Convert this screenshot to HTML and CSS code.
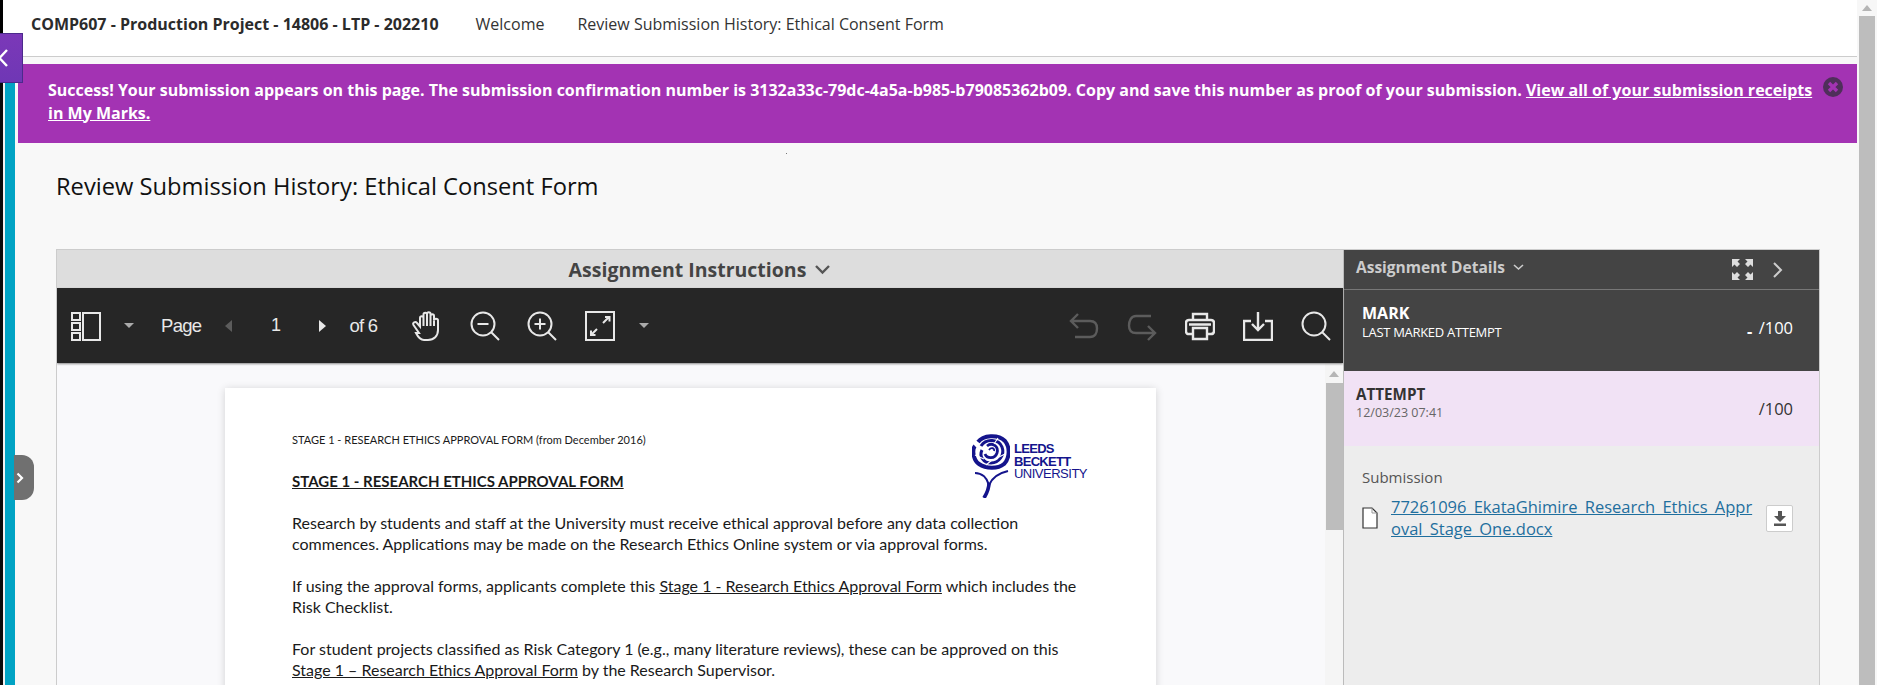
FILE: index.html
```html
<!DOCTYPE html>
<html lang="en">
<head>
<meta charset="utf-8">
<title>Review Submission History: Ethical Consent Form</title>
<link rel="stylesheet" href="styles.css">
</head>
<body>
<div class="app">
  <div class="rail"><div class="rail-top"></div><div class="rail-bottom"></div></div>
  <button class="nav-tab" aria-label="Collapse"><svg width="10" height="22" viewBox="0 0 10 22"><path d="M9 3 1.500 11 9 19" fill="none" stroke="#fff" stroke-width="2.400"/></svg></button>
  <button class="side-handle" aria-label="Expand"><svg width="8" height="12" viewBox="0 0 8 12"><path d="M1.500 1.500 6 6l-4.500 4.500" fill="none" stroke="#fff" stroke-width="2.200"/></svg></button>
  <main class="main">
    <header class="topbar">
      <strong class="course">COMP607 - Production Project - 14806 - LTP - 202210</strong>
      <span class="crumb crumb-first">Welcome</span>
      <span class="crumb">Review Submission History: Ethical Consent Form</span>
    </header>
    <section class="banner">
      <p class="banner-text"><span>Success! Your submission appears on this page. The submission confirmation number is 3132a33c-79dc-4a5a-b985-b79085362b09. Copy and save this number as proof of your submission.</span> <a href="#">View all of your submission receipts</a> <a href="#">in My Marks.</a></p>
      <svg class="banner-close" width="20" height="20" viewBox="0 0 20 20"><circle cx="10" cy="10" r="10" fill="#4f2f5a"/><path d="M6 6l8 8M14 6l-8 8" stroke="#a333b3" stroke-width="3.400"/></svg>
    </section>
    <div class="dot"></div>
    <h1 class="page-title">Review Submission History: Ethical Consent Form</h1>
    <section class="workspace">
      <div class="viewer">
        <div class="instructions">Assignment Instructions <svg width="17" height="11" viewBox="0 0 17 11"><path d="M2 2l6.500 6.500L15 2" fill="none" stroke="#555" stroke-width="2.400"/></svg></div>
        <div class="toolbar">
          <div class="tool-group">
            <svg class="icon" viewBox="0 0 30 30" fill="none" stroke="#e8e8e8" stroke-width="2"><path d="M1 2h8v7H1zM1 12h8v7H1zM1 22h8v7H1zM12 2h17v27H12z"/></svg>
            <span class="caret caret-a"></span>
            <span class="pg-label pg-page">Page</span>
            <span class="tri-left"></span>
            <span class="pg-num">1</span>
            <span class="tri-right"></span>
            <span class="pg-label pg-of">of 6</span>
            <svg class="icon tool-hand" viewBox="0 0 30 30" fill="none" stroke="#e8e8e8" stroke-width="2"><path d="M7 22 1.500 14c-1.500-2.500 2-4 3.500-2l3 3.500V7c0-2.500 3.500-2.500 3.500 0V3.500c0-2.500 3.500-2.500 3.500 0V3c0-2.500 3.500-2.500 3.500 0v2c0-2.500 3.500-2.500 3.500 0v4.500c0-2.500 4-2.500 4 0V19c0 6-4 10-10 10h-4c-4 0-6-3-8-7z"/><path d="M11.500 7v8M15 3v12M18.500 5v10M22 9.500V15"/></svg>
            <svg class="icon tool" viewBox="0 0 30 30" fill="none" stroke="#e8e8e8" stroke-width="2"><circle cx="13" cy="13" r="11.500"/><path d="M21 21l8 8M7.500 13h11"/></svg>
            <svg class="icon tool" viewBox="0 0 30 30" fill="none" stroke="#e8e8e8" stroke-width="2"><circle cx="13" cy="13" r="11.500"/><path d="M21 21l8 8M7.500 13h11M13 7.500v11"/></svg>
            <svg class="icon tool" viewBox="0 0 30 30" fill="none" stroke="#e8e8e8" stroke-width="2"><path d="M1 1h28v28H1z"/><path d="M18 12l6-6M20 6h4.500v4.500M12 18l-6 6M6 19.500V24h4.500"/></svg>
            <span class="caret caret-b"></span>
          </div>
          <div class="tool-group tool-right">
            <svg class="icon dim" viewBox="0 0 30 30" fill="none" stroke="#5c5c5c" stroke-width="2.400"><path d="M9 3 2 10l7 7M2 10h19c5 0 7 3 7 7.500S26 26 21 26H6"/></svg>
            <svg class="icon dim" viewBox="0 0 30 30" fill="none" stroke="#5c5c5c" stroke-width="2.400"><path d="M21 15l7 7-7 7M28 22H9c-5 0-7-3-7-7.500S4 5 9 5h15"/></svg>
            <svg class="icon" viewBox="0 0 30 30" fill="none" stroke="#e8e8e8" stroke-width="2.400"><path d="M8 9V3h14v6M7 23H4c-2 0-3-1-3-3v-8c0-2 1-3 3-3h22c2 0 3 1 3 3v8c0 2-1 3-3 3h-3"/><path d="M8 17h14v11H8zM4 13.500h22"/></svg>
            <svg class="icon" viewBox="0 0 30 30" fill="none" stroke="#e8e8e8" stroke-width="2.400"><path d="M8 10H1v19h28V10h-7M15 1v18M9 13l6 6 6-6"/></svg>
            <svg class="icon" viewBox="0 0 30 30" fill="none" stroke="#e8e8e8" stroke-width="2"><circle cx="13" cy="13" r="11.500"/><path d="M21 21l8 8"/></svg>
          </div>
        </div>
        <div class="doc-area">
          <div class="doc-scroll">
            <article class="doc-page">
              <div class="doc-head">
                <div class="doc-meta">STAGE 1 - RESEARCH ETHICS APPROVAL FORM (from December 2016)</div>
                <div class="logo">
                  <svg width="38" height="64" viewBox="0 0 38 64" fill="none" stroke="#14148c"><path d="M6 8C11 1 26 0 33 7c5 6 5 17-1 23-6 5-18 5-25 0C1 26 0 15 3 12" stroke-width="4"/><path d="M9 12c5-8 18-7 21 1 3 8-3 16-11 16-8 0-12-7-9-13" stroke-width="3"/><path d="M15 12c5-4 12 0 10 7-2 6-10 6-12 1" stroke-width="2.800"/><path d="M17 16c2-3 6-2 5 1" stroke-width="1.800"/><path d="M3 21l9 4M26 4l-4 6M33 20l-6 3M14 31l6-5" stroke="#fff" stroke-width="1.100"/><path d="M3 39c7 0 12 5 14 12 3-7 10-12 19-14" stroke-width="2.200"/><path d="M17 49c0 5-2 10-5 15" stroke-width="3.600"/></svg>
                  <div class="logo-text">LEEDS<br>BECKETT<br><span class="logo-thin">UNIVERSITY</span></div>
                </div>
              </div>
              <h2 class="doc-title">STAGE 1 - RESEARCH ETHICS APPROVAL FORM</h2>
              <p class="doc-p">Research by students and staff at the University must receive ethical approval before any data collection<br>commences. Applications may be made on the Research Ethics Online system or via approval forms.</p>
              <p class="doc-p">If using the approval forms, applicants complete this <u>Stage 1 - Research Ethics Approval Form</u> which includes the<br>Risk Checklist.</p>
              <p class="doc-p">For student projects classified as Risk Category 1 (e.g., many literature reviews), these can be approved on this<br><u>Stage 1 – Research Ethics Approval Form</u> by the Research Supervisor.</p>
            </article>
          </div>
          <div class="doc-scrollbar"><span class="arrow-up"></span><div class="doc-thumb"></div></div>
        </div>
      </div>
      <aside class="details">
        <div class="details-head">
          <span class="details-title">Assignment Details <svg width="11" height="7" viewBox="0 0 11 7"><path d="M1 1l4.500 4L10 1" fill="none" stroke="#ccc" stroke-width="1.600"/></svg></span>
          <svg class="expand" width="21" height="21" viewBox="0 0 21 21" fill="#ddd"><path d="M0 0h8L5.500 2.500 8 5 5 8 2.500 5.500 0 8zM21 0h-8l2.500 2.500L13 5l3 3 2.500-2.500L21 8zM0 21h8l-2.500-2.500L8 16l-3-3-2.500 2.500L0 13zM21 21h-8l2.500-2.500L13 16l3-3 2.500 2.500L21 13z"/></svg>
          <svg class="collapse" width="12" height="16" viewBox="0 0 12 16"><path d="M2 1l7 7-7 7" fill="none" stroke="#ccc" stroke-width="2"/></svg>
        </div>
        <div class="mark">
          <div><div class="mark-label">MARK</div><div class="mark-sub">LAST MARKED ATTEMPT</div></div>
          <div class="score"><span class="score-dash">-</span> /100</div>
        </div>
        <div class="attempt">
          <div><div class="attempt-label">ATTEMPT</div><div class="attempt-date">12/03/23 07:41</div></div>
          <div class="score score-dark">/100</div>
        </div>
        <div class="submission">
          <div class="sub-label">Submission</div>
          <div class="sub-row">
            <svg class="file-icon" width="16" height="22" viewBox="0 0 16 22"><path d="M1 1h9l5 5v15H1z" fill="#fff" stroke="#333" stroke-width="1.200"/><path d="M10 1v5h5" fill="none" stroke="#999"/></svg>
            <a class="sub-link" href="#">77261096_EkataGhimire_Research_Ethics_Approval_Stage_One.docx</a>
            <span class="dl-btn"><svg width="14" height="15" viewBox="0 0 14 15" fill="#555"><path d="M5 0h4v5h4L7 11 1 5h4zM1 12.500h12V15H1z"/></svg></span>
          </div>
        </div>
      </aside>
    </section>
  </main>
  <div class="scrollbar"><span class="arrow-up arrow-main"></span><div class="scroll-thumb"></div></div>
</div>
</body>
</html>
```
FILE: styles.css
```css
* { box-sizing: border-box; }
html, body { margin: 0; padding: 0; height: 685px; overflow: hidden; background: #f8f8f8; }
body { font-family: "Open Sans", "Noto Sans", sans-serif; color: #222; }
.app { position: relative; display: flex; width: 1877px; height: 685px; overflow: hidden; }

.rail { width: 18px; flex: none; display: flex; flex-direction: column; }
.rail-top { height: 83px; background: linear-gradient(to right, #000 3px, #fff 3px); }
.rail-bottom { flex: 1; background: linear-gradient(to right, #0a0a0a 3px, #f2f2f2 3px, #f2f2f2 5px, #01a3c4 5px, #01a3c4 15.500px, #f8f8f8 15.500px); }

.nav-tab { position: absolute; left: 0; top: 33px; width: 23px; height: 50px; padding: 0; border: 1px solid #4c2a8c; border-left: 0; background: linear-gradient(#7b38b8, #6f37b5); display: flex; align-items: center; justify-content: flex-start; z-index: 3; overflow: hidden; }
.nav-tab svg { margin-left: -2px; }
.side-handle { position: absolute; left: 14px; top: 455px; width: 20px; height: 45px; padding: 0 0 0 2px; border: 0; border-radius: 0 12px 12px 0; background: #707070; display: flex; align-items: center; justify-content: flex-start; z-index: 3; }

.main { flex: 1; min-width: 0; display: flex; flex-direction: column; height: 685px; }
.topbar { height: 57px; flex: none; display: flex; align-items: center; padding: 0 0 8px 13px; background: #fff; border-bottom: 1px solid #ccc; font-size: 16px; color: #333; }
.course { font-weight: 700; color: #2b2b2b; white-space: nowrap; }
.crumb { margin-left: 33px; white-space: nowrap; }
.crumb-first { margin-left: 37px; }

.banner { flex: none; margin-top: 7px; height: 79px; padding: 15px 14px 0 30px; background: #a333b3; display: flex; align-items: flex-start; gap: 9px; color: #fff; }
.banner-text { margin: 0; flex: 1; font-size: 16px; font-weight: 700; line-height: 22.500px; }
.banner-text a { color: #fff; text-decoration: underline; }
.banner-close { flex: none; margin-top: -2px; }
.dot { width: 1px; height: 1px; margin: 10px 0 0 768px; background: #777; flex: none; }

.page-title { margin: 17px 0 0 38px; font-size: 23.700px; line-height: 30px; font-weight: 400; color: #111; flex: none; }

.workspace { flex: 1; min-height: 0; display: flex; width: 1764px; margin: 48px 0 0 38px; border: 1px solid #ccc; border-bottom: 0; overflow: hidden; }
.viewer { width: 1286px; flex: none; display: flex; flex-direction: column; }
.instructions { height: 38px; flex: none; background: #ddd; display: flex; align-items: center; justify-content: center; gap: 8px; font-size: 19.500px; font-weight: 700; color: #444; }

.toolbar { height: 75px; flex: none; display: flex; justify-content: space-between; align-items: center; background: #262626; padding: 0 12px 0 14px; box-shadow: 0 1px 2px #888; z-index: 1; }
.tool-group { display: flex; align-items: center; }
.tool-right { gap: 28px; }
.icon { width: 30px; height: 30px; flex: none; display: block; }
.tool { margin-left: 27.500px; }
.tool-hand { margin-left: 35px; }
.caret { width: 0; height: 0; border-left: 5px solid transparent; border-right: 5px solid transparent; border-top: 5px solid #aaa; flex: none; }
.caret-a { margin-left: 23px; }
.caret-b { margin-left: 24px; }
.pg-label { font-family: "Liberation Sans", Arial, sans-serif; font-size: 18.500px; letter-spacing: -0.7px; color: #e8e8e8; }
.pg-page { margin-left: 27px; }
.pg-of { margin-left: 23px; }
.tri-left, .tri-right { width: 0; height: 0; border-top: 6px solid transparent; border-bottom: 6px solid transparent; flex: none; }
.tri-left { border-right: 7px solid #5c5c5c; margin-left: 24px; }
.tri-right { border-left: 7px solid #e8e8e8; }
.pg-num { width: 87px; text-align: center; font-family: "Liberation Sans", Arial, sans-serif; font-size: 18px; color: #e8e8e8; }

.doc-area { flex: 1; min-height: 0; display: flex; background: #f9f9fb; }
.doc-scroll { flex: 1; min-width: 0; padding: 25px 0 0 168px; overflow: hidden; }
.doc-page { width: 931px; height: 340px; padding: 38px 58px 0 67px; background: #fff; box-shadow: 0 1px 8px rgba(0,0,0,.16); font-family: Lato, "Liberation Sans", sans-serif; font-size: 16px; line-height: 21px; color: #1a1a1a; white-space: nowrap; }
.doc-head { display: flex; justify-content: space-between; align-items: flex-start; height: 45px; }
.doc-meta { font-size: 11px; line-height: 28px; }
.logo { display: flex; align-items: flex-start; gap: 4px; margin: 8px 11px 0 0; height: 64px; }
.logo-text { margin-top: 9px; font-family: "Liberation Sans", Arial, sans-serif; font-weight: 700; font-size: 13px; line-height: 12.500px; letter-spacing: -0.7px; color: #14148c; }
.logo-thin { font-weight: 400; letter-spacing: -0.5px; }
.doc-title { margin: 0 0 20px; font-size: 15px; line-height: 21px; font-weight: 700; text-decoration: underline; }
.doc-p { margin: 0 0 21px; }

.doc-scrollbar { width: 18px; flex: none; display: flex; flex-direction: column; align-items: center; background: #f5f5f5; padding-top: 8px; }
.arrow-up { width: 0; height: 0; border-left: 5px solid transparent; border-right: 5px solid transparent; border-bottom: 6px solid #b5b5b5; flex: none; }
.doc-thumb { width: 17px; height: 147px; margin-top: 6px; background: #bdbdbd; flex: none; }

.details { flex: 1; min-width: 0; display: flex; flex-direction: column; background: #ededed; border-left: 1px solid #bbb; }
.details-head { height: 40px; flex: none; background: #444; border-bottom: 1px solid #777; display: flex; align-items: center; padding: 0 0 0 12px; color: #ccc; }
.details-title { font-size: 15.500px; font-weight: 700; flex: 1; margin-top: -6px; }
.details-title svg { margin-left: 4px; vertical-align: 2px; }
.expand { margin-right: 19px; }
.collapse { margin-right: 35px; }
.mark { height: 81px; flex: none; background: #444; color: #fff; display: flex; justify-content: space-between; padding: 12px 26px 0 18px; }
.mark-label { font-size: 16px; font-weight: 700; line-height: 22px; }
.mark-sub { font-size: 13px; line-height: 16px; letter-spacing: -0.3px; }
.score { font-size: 16.500px; line-height: 22px; margin-top: 15px; }
.score-dash { font-weight: 700; margin-right: 2px; vertical-align: -3px; }
.attempt { height: 75px; flex: none; background: #f1e2f5; display: flex; justify-content: space-between; padding: 12px 26px 0 12px; }
.attempt-label { font-size: 15.200px; font-weight: 700; line-height: 22px; color: #333; }
.attempt-date { font-size: 12.500px; line-height: 16px; color: #666; }
.score-dark { color: #333; }
.submission { flex: 1; padding: 21px 26px 0 18px; }
.sub-label { font-size: 15px; line-height: 20px; color: #555; }
.sub-row { display: flex; align-items: flex-start; margin-top: 9px; }
.file-icon { flex: none; margin: 11px 13px 0 0; }
.sub-link { width: 362px; flex: none; word-break: break-all; font-size: 16.500px; line-height: 21.500px; color: #1f6f9e; }
.dl-btn { width: 27px; height: 27px; flex: none; margin: 9px 0 0 13px; background: #fff; border: 1px solid #ccc; border-radius: 2px; display: flex; align-items: center; justify-content: center; }

.scrollbar { width: 20px; flex: none; display: flex; flex-direction: column; align-items: center; background: #f7f7f7; padding-top: 5px; }
.arrow-main { border-left-width: 5px; border-right-width: 5px; }
.scroll-thumb { width: 16px; flex: 1; margin-top: 5px; background: #bdbdbd; }
```
